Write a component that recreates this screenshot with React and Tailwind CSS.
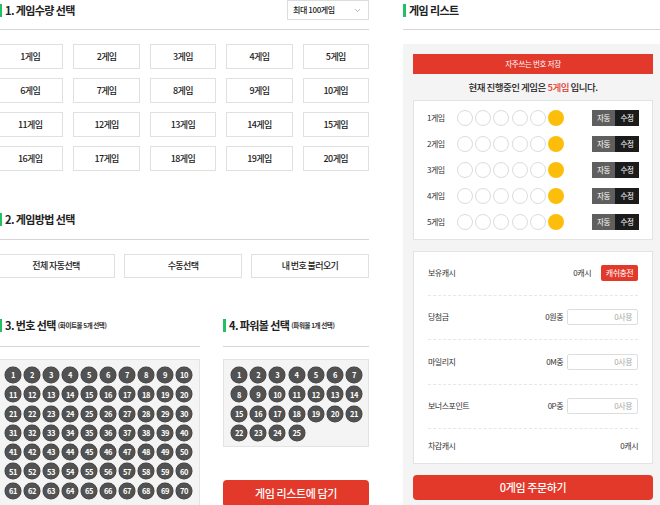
import { ChevronDown } from 'lucide-react';

const font = { fontFamily: '"Noto Sans CJK KR", "Noto Sans", sans-serif' };

const games = Array.from({ length: 20 }, (_, i) => i + 1);
const whiteBalls = Array.from({ length: 70 }, (_, i) => i + 1);
const powerBalls = Array.from({ length: 25 }, (_, i) => i + 1);
const gameRows = [1, 2, 3, 4, 5];

function Ball({ n }) {
  return (
    <div className="w-4 h-4 rounded-full bg-[#525252] flex items-center justify-center text-white text-[7.5px] font-bold leading-none tracking-[-0.3px] shadow-[0_0_0_0.5px_#3a3a3a]">
      {n}
    </div>
  );
}

function Title({ children, sub, className = '' }) {
  return (
    <div className={`h-5 flex items-center ${className}`}>
      <span className="w-[3px] h-[13px] bg-[#22c063] mr-[3px]" />
      <span className="text-[11px] font-bold text-[#222] tracking-[-0.6px]">{children}</span>
      {sub && <span className="ml-[2px] mt-[2px] text-[6.5px] font-bold text-[#333] tracking-[-0.4px]">{sub}</span>}
    </div>
  );
}

export default function App() {
  return (
    <div className="w-[660px] h-[505px] overflow-hidden bg-white" style={font}>
      <div className="flex -ml-[3px]">
        {/* left */}
        <div className="w-[372px] shrink-0">
          <div className="h-5 flex items-center justify-between">
            <Title className="ml-[2px]">1. 게임수량 선택</Title>
            <div className="w-[82px] h-5 border border-[#ddd] flex items-center justify-between pl-[5px] pr-[6px]">
              <span className="text-[8px] font-medium text-[#222] tracking-[-0.4px]">최대 100게임</span>
              <ChevronDown className="w-[9px] h-[9px] text-[#777]" strokeWidth={1.5} />
            </div>
          </div>
          <div className="mt-[9px] h-px bg-[#d4d4d4]" />
          <div className="mt-[14px] grid grid-cols-5 gap-x-[10px] gap-y-[9px]">
            {games.map((g) => (
              <div key={g} className="h-[25px] border border-[#e0e0e0] flex items-center justify-center text-[9px] font-medium text-[#222] tracking-[-0.6px]">
                {g}게임
              </div>
            ))}
          </div>

          <Title className="ml-[2px] mt-[38px]">2. 게임방법 선택</Title>
          <div className="mt-[10px] h-px bg-[#d4d4d4]" />
          <div className="mt-[14px] grid grid-cols-3 gap-x-[9px]">
            {['전체 자동선택', '수동선택', '내 번호 불러오기'].map((t) => (
              <div key={t} className="h-[24px] border border-[#e0e0e0] flex items-center justify-center text-[9px] font-medium text-[#222] tracking-[-0.6px]">
                {t}
              </div>
            ))}
          </div>

          <div className="mt-[37px] flex gap-[23px]">
            <div className="w-[203px] shrink-0">
              <Title className="ml-[2px]" sub="(화이트볼 5개 선택)">3. 번호 선택</Title>
              <div className="mt-[11px] h-px bg-[#d4d4d4]" />
              <div className="mt-[12px] border border-[#e3e3e3] bg-[#f4f4f4] pt-[7px] pb-[6px] px-[7px] grid grid-cols-[repeat(10,16px)] justify-between gap-y-[3.3px]">
                {whiteBalls.map((n) => (
                  <Ball key={n} n={n} />
                ))}
              </div>
            </div>
            <div className="w-[146px] shrink-0">
              <Title sub="(파워볼 1개 선택)">4. 파워볼 선택</Title>
              <div className="mt-[11px] h-px bg-[#d4d4d4]" />
              <div className="mt-[12px] h-[88px] border border-[#e3e3e3] bg-[#f4f4f4] pt-[7px] pl-[7px] grid grid-cols-[repeat(7,16px)] content-start gap-x-[3.2px] gap-y-[3.3px]">
                {powerBalls.map((n) => (
                  <Ball key={n} n={n} />
                ))}
              </div>
              <div className="mt-[33px] h-[27px] rounded-[4px] bg-[#e2392b] flex items-center justify-center text-white text-[11px] font-medium tracking-[-0.4px]">
                게임 리스트에 담기
              </div>
            </div>
          </div>
        </div>

        {/* right */}
        <div className="w-[260px] shrink-0 ml-[34px]">
          <Title>게임 리스트</Title>
          <div className="mt-[9px] h-px bg-[#d4d4d4]" />
          <div className="mt-[14px] bg-[#f4f4f4] pt-[10px] pl-[10px] pr-[10px] pb-[20px]">
            <div className="h-5 bg-[#e2392b] flex items-center justify-center text-white text-[7.5px] tracking-[-0.3px]">
              자주쓰는 번호 저장
            </div>
            <div className="h-[26px] flex items-center justify-center text-[9.5px] font-medium text-[#222] tracking-[-0.5px]">
              현재 진행중인 게임은&nbsp;<span className="text-[#e2392b]">5게임</span>&nbsp;입니다.
            </div>
            <div className="bg-white border border-[#e3e3e3] py-[4px]">
              {gameRows.map((r) => (
                <div key={r} className="h-[26px] px-[13px] flex items-center">
                  <span className="w-[30px] text-[8px] text-[#333] tracking-[-0.5px]">{r}게임</span>
                  <div className="flex gap-[2.2px]">
                    {[0, 1, 2, 3, 4].map((c) => (
                      <div key={c} className="w-4 h-4 rounded-full border border-[#dcdcdc] bg-white" />
                    ))}
                    <div className="w-4 h-4 rounded-full bg-[#fdbe0b]" />
                  </div>
                  <div className="ml-auto flex h-4 text-white text-[7.5px] tracking-[-0.3px]">
                    <span className="w-[23px] bg-[#5f5f5f] flex items-center justify-center">자동</span>
                    <span className="w-[24px] bg-[#1b1b1b] flex items-center justify-center">수정</span>
                  </div>
                </div>
              ))}
            </div>

            <div className="mt-[11px] bg-white border border-[#e3e3e3] px-[14px] text-[8px] text-[#333] tracking-[-0.5px]">
              <div className="h-[43.5px] flex items-center border-b border-dashed border-[#e6e6e6]">
                <span>보유캐시</span>
                <span className="ml-auto">0캐시</span>
                <span className="ml-[10px] w-[37px] h-[16px] rounded-[2px] bg-[#e2392b] text-white flex items-center justify-center">캐쉬충전</span>
              </div>
              {[
                ['당첨금', '0원중'],
                ['마일리지', '0M중'],
                ['보너스포인트', '0P중'],
              ].map(([label, val]) => (
                <div key={label} className="h-[44.5px] flex items-center border-b border-dashed border-[#e6e6e6]">
                  <span>{label}</span>
                  <span className="ml-auto">{val}</span>
                  <span className="ml-[4px] w-[71px] h-[16px] rounded-[2px] border border-[#dedede] flex items-center justify-end pr-[5px] text-[#aaa]">0사용</span>
                </div>
              ))}
              <div className="h-[34px] flex items-center">
                <span>차감캐시</span>
                <span className="ml-auto">0캐시</span>
              </div>
            </div>

            <div className="mt-[11px] h-[25px] rounded-[4px] bg-[#e2392b] flex items-center justify-center text-white text-[11px] font-medium tracking-[-0.4px]">
              0게임 주문하기
            </div>
          </div>
        </div>
      </div>
    </div>
  );
}
